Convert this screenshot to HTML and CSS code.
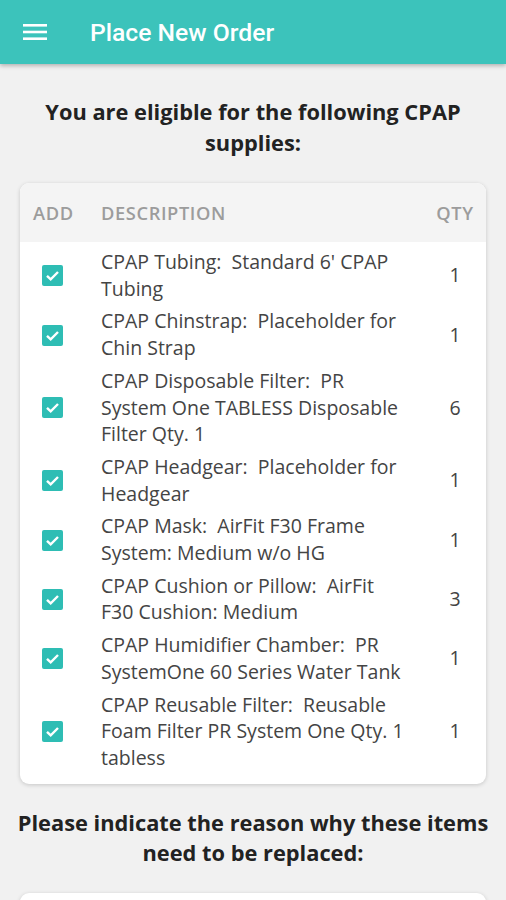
FILE: index.html
```html
<!DOCTYPE html>
<html lang="en">

<head>
  <meta charset="UTF-8">
  <meta name="viewport" content="width=device-width, initial-scale=1.0">
  <title>Place New Order</title>
  <link rel="stylesheet" href="styles.css">
</head>

<body>
  <header class="app-bar">
    <button class="menu-btn" aria-label="Menu">
      <svg width="24" height="16" viewBox="0 0 24 16">
        <rect x="0" y="0" width="24" height="2.6" fill="#fff" />
        <rect x="0" y="6.7" width="24" height="2.6" fill="#fff" />
        <rect x="0" y="13.4" width="24" height="2.6" fill="#fff" />
      </svg>
    </button>
    <h1>Place New Order</h1>
  </header>

  <main class="content">
    <h2 class="section-title">You are eligible for the following CPAP supplies:</h2>

    <div class="card supplies">
      <div class="row head">
        <div class="col-add">ADD</div>
        <div class="col-desc">DESCRIPTION</div>
        <div class="col-qty">QTY</div>
      </div>
      <div class="rows" id="rows"></div>
    </div>

    <h2 class="section-title second">Please indicate the reason why these items need to be replaced:</h2>

    <div class="card reason"></div>
  </main>

  <script>
    const supplies = [
      { name: "CPAP Tubing", desc: "Standard 6' CPAP Tubing", qty: 1 },
      { name: "CPAP Chinstrap", desc: "Placeholder for Chin Strap", qty: 1 },
      { name: "CPAP Disposable Filter", desc: "PR System One TABLESS Disposable Filter Qty. 1", qty: 6 },
      { name: "CPAP Headgear", desc: "Placeholder for Headgear", qty: 1 },
      { name: "CPAP Mask", desc: "AirFit F30 Frame System: Medium w/o HG", qty: 1 },
      { name: "CPAP Cushion or Pillow", desc: "AirFit F30 Cushion: Medium", qty: 3 },
      { name: "CPAP Humidifier Chamber", desc: "PR SystemOne 60 Series Water Tank", qty: 1 },
      { name: "CPAP Reusable Filter", desc: "Reusable Foam Filter PR System One Qty. 1 tabless", qty: 1 }
    ];

    const check = `
      <svg width="21" height="21" viewBox="0 0 21 21">
        <rect width="21" height="21" rx="2" fill="#2ebdb4" />
        <path d="M5 10.8 L8.7 14.4 L16 7" fill="none" stroke="#fff" stroke-width="2.4" />
      </svg>`;

    const container = document.getElementById("rows");
    supplies.forEach(item => {
      const row = document.createElement("div");
      row.className = "row item";
      row.innerHTML = `
        <div class="col-add">${check}</div>
        <div class="col-desc">${item.name}:&nbsp; ${item.desc}</div>
        <div class="col-qty">${item.qty}</div>
      `;
      container.appendChild(row);
    });
  </script>
</body>

</html>
```

FILE: styles.css
```css
body {
  margin: 0;
  background-color: #f1f1f1;
  font-family: 'Open Sans', sans-serif;
  color: #444;
  overflow: hidden;
}

.app-bar {
  height: 64px;
  background-color: #3cc3bb;
  display: flex;
  align-items: center;
  box-shadow: 0 2px 4px rgba(0, 0, 0, 0.25);
}

.menu-btn {
  background: none;
  border: none;
  padding: 0;
  margin-left: 23px;
  width: 24px;
  height: 16px;
  display: flex;
}

.app-bar h1 {
  margin: 0 0 0 43px;
  font-family: Roboto, sans-serif;
  font-weight: 500;
  font-size: 24.7px;
  color: #fff;
}

.content {
  padding: 0 17px;
}

.section-title {
  margin: 32px 0 25px;
  font-size: 21.8px;
  font-weight: 700;
  line-height: 31px;
  text-align: center;
  color: #222;
}

.section-title.second {
  margin: 24px -6px 25px;
  line-height: 30px;
}

.card {
  margin: 0 3px;
  background-color: #fff;
  border-radius: 9px;
  box-shadow: 0 1px 4px rgba(0, 0, 0, 0.18);
  overflow: hidden;
}

.row {
  display: grid;
  grid-template-columns: 81px 310px 1fr;
  align-items: center;
  padding-right: 9px;
}

.head {
  height: 59px;
  background-color: #f4f4f4;
  font-size: 18.3px;
  font-weight: 600;
  color: #9c9c9c;
  letter-spacing: 0.6px;
}

.head .col-add {
  padding-left: 13px;
}

.rows {
  padding: 4px 0 9px;
}

.item {
  padding-top: 3px;
  padding-bottom: 3px;
  font-size: 19.5px;
  line-height: 26.7px;
}

.item .col-add {
  padding-left: 22px;
  display: flex;
}

.col-qty {
  justify-self: end;
  width: 44px;
  text-align: center;
}

.reason {
  height: 60px;
}
```
